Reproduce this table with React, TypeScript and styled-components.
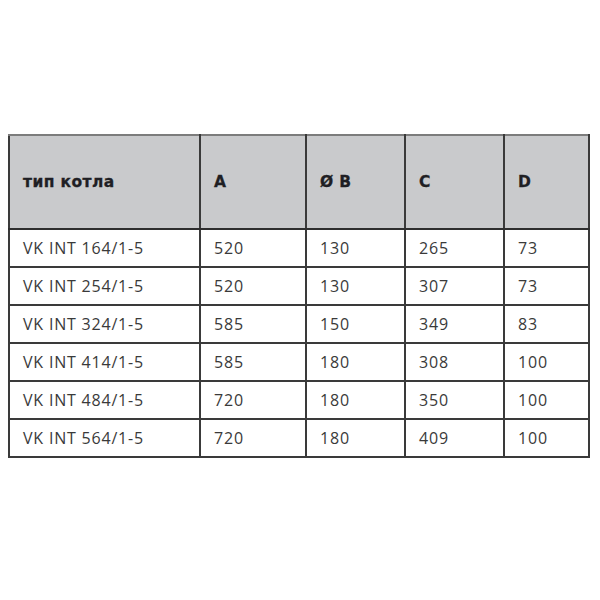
import React from "react";
import styled, { createGlobalStyle } from "styled-components";

const Global = createGlobalStyle`
  html, body { margin: 0; padding: 0; background: #ffffff; }
  body { width: 600px; height: 600px; overflow: hidden; }
`;

const Page = styled.div`
  width: 600px;
  height: 600px;
  padding: 134px 0 0 8px;
  box-sizing: border-box;
`;

const Table = styled.table`
  border-collapse: collapse;
  table-layout: fixed;
  width: 580px;
  border-top: 2px solid #7c7c7c;
  border-left: 2px solid #3a3a3a;
  border-right: 2px solid #5a5a5a;
  border-bottom: 2px solid #3a3a3a;
`;

const HeadCell = styled.th<{ $w: number }>`
  width: ${(p) => p.$w}px;
  height: 94px;
  background: #c9cacc;
  border-right: 2px solid #3a3a3a;
  border-bottom: 2px solid #2e2e2e;
  text-align: left;
  padding: 0 0 0 13px;
  font-family: "DejaVu Sans", sans-serif;
  font-weight: 700;
  font-size: 15.5px;
  letter-spacing: 0.4px;
  color: #1f1f24;
  -webkit-text-stroke: 0.3px #1f1f24;
  box-sizing: border-box;
`;

const Cell = styled.td`
  height: 38px;
  border-right: 2px solid #3a3a3a;
  border-bottom: 2px solid #3a3a3a;
  padding: 0 0 1px 13px;
  font-family: "Open Sans", sans-serif;
  font-size: 16px;
  letter-spacing: 0.8px;
  color: #3a3a3a;
  box-sizing: border-box;
  white-space: nowrap;
`;

const cols = [
  { label: "тип котла", w: 191 },
  { label: "A", w: 106 },
  { label: "Ø B", w: 99 },
  { label: "C", w: 99 },
  { label: "D", w: 85 },
];

const rows = [
  ["VK INT 164/1-5", "520", "130", "265", "73"],
  ["VK INT 254/1-5", "520", "130", "307", "73"],
  ["VK INT 324/1-5", "585", "150", "349", "83"],
  ["VK INT 414/1-5", "585", "180", "308", "100"],
  ["VK INT 484/1-5", "720", "180", "350", "100"],
  ["VK INT 564/1-5", "720", "180", "409", "100"],
];

export default function App() {
  return (
    <>
      <Global />
      <Page>
        <Table>
          <thead>
            <tr>
              {cols.map((c) => (
                <HeadCell key={c.label} $w={c.w}>
                  {c.label}
                </HeadCell>
              ))}
            </tr>
          </thead>
          <tbody>
            {rows.map((r) => (
              <tr key={r[0]}>
                {r.map((v, i) => (
                  <Cell key={i}>{v}</Cell>
                ))}
              </tr>
            ))}
          </tbody>
        </Table>
      </Page>
    </>
  );
}
